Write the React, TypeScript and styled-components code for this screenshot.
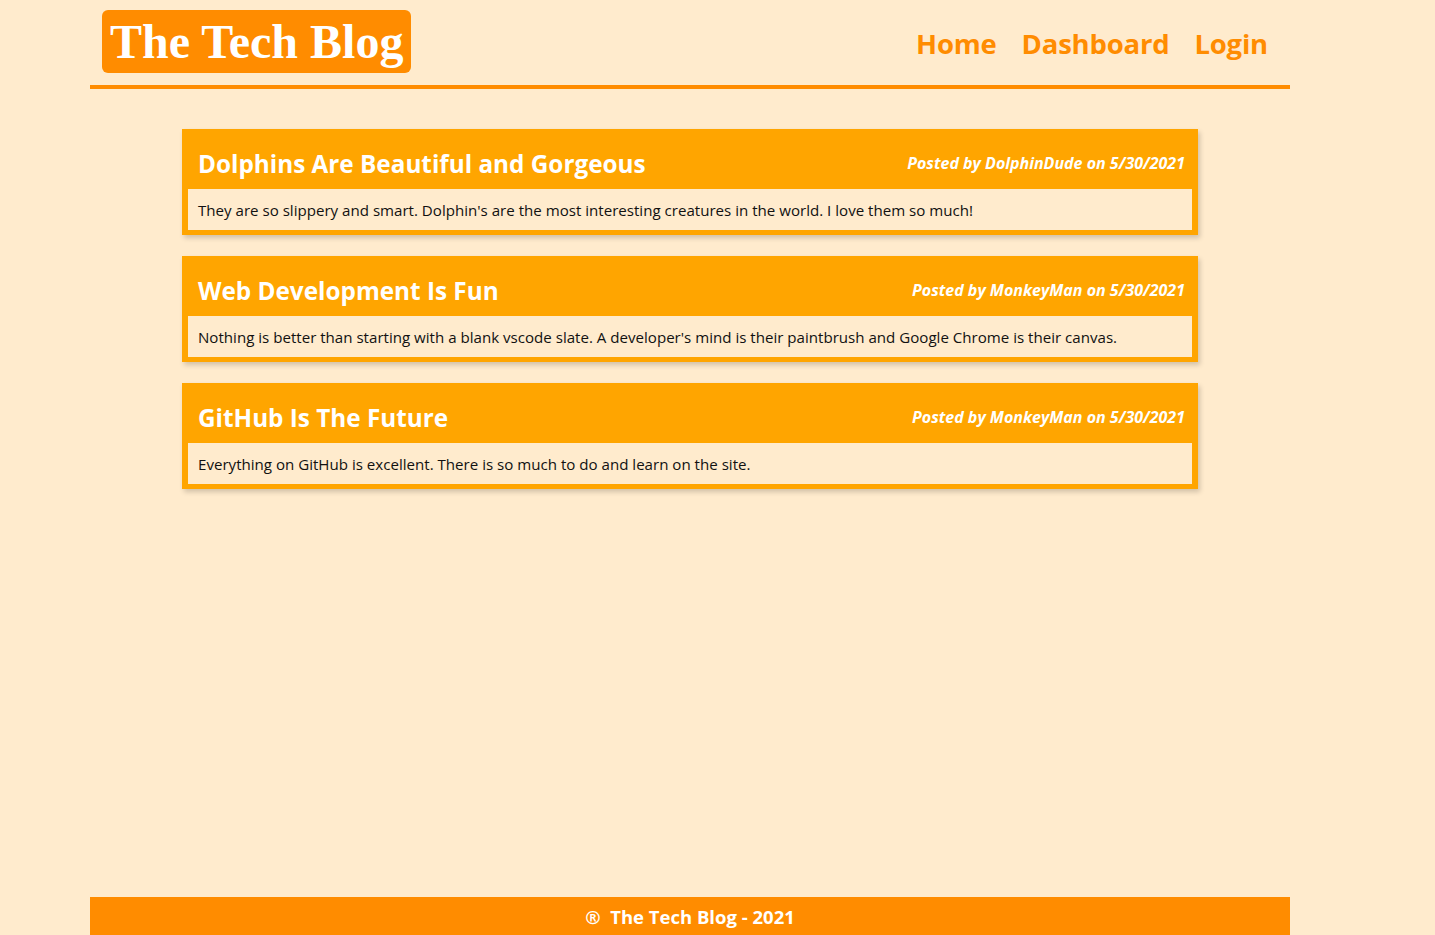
import React from "react";
import styled, { createGlobalStyle } from "styled-components";

const Global = createGlobalStyle`
  html, body { margin: 0; padding: 0; background: #ffebcd; }
  body { font-family: "Open Sans", "Noto Sans", sans-serif; }
  * { box-sizing: border-box; }
`;

const Page = styled.div`
  min-height: 100vh;
  margin: 0 145px 0 90px;
  display: flex;
  flex-direction: column;
`;

const Header = styled.header`
  display: flex;
  justify-content: space-between;
  align-items: flex-start;
  padding: 10px 22px 0 12px;
  height: 89px;
  border-bottom: 4px solid #ff8c00;
`;

const Logo = styled.h1`
  margin: 0;
  background: #ff8c00;
  color: #fff;
  border-radius: 6px;
  height: 63px;
  padding: 0 8px;
  font-family: "Liberation Serif", "Times New Roman", serif;
  font-weight: 700;
  font-size: 48px;
  line-height: 63px;
  white-space: nowrap;
`;

const Nav = styled.nav`
  display: flex;
  gap: 25px;
  margin-top: 12px;
`;

const NavLink = styled.a`
  color: #ff8c00;
  font-weight: 700;
  font-size: 27.5px;
  line-height: 44px;
  text-decoration: none;
  letter-spacing: -0.2px;
`;

const Main = styled.main`
  display: flex;
  flex-direction: column;
  gap: 21px;
  padding: 40px 92px 0;
`;

const Card = styled.article`
  background: #ffa500;
  padding: 0 6px 5px;
  box-shadow: 2px 3px 5px rgba(0, 0, 0, 0.18);
`;

const CardHead = styled.div`
  display: flex;
  justify-content: space-between;
  align-items: center;
  height: 60px;
  padding: 8px 7px 0 10px;
`;

const Title = styled.h2`
  margin: 0;
  color: #fff;
  font-size: 24.3px;
  font-weight: 700;
`;

const Meta = styled.span`
  color: #fff;
  font-size: 16px;
  font-style: italic;
  font-weight: 700;
`;

const Body = styled.p`
  margin: 0;
  background: #ffebcd;
  height: 41px;
  padding: 0 10px;
  display: flex;
  align-items: center;
  color: #111;
  font-size: 15.1px;
`;

const Footer = styled.footer`
  margin-top: auto;
  height: 38px;
  background: #ff8c00;
  color: #fff;
  font-weight: 700;
  font-size: 18.5px;
  display: flex;
  align-items: center;
  justify-content: center;
  white-space: pre;
`;

const posts = [
  {
    title: "Dolphins Are Beautiful and Gorgeous",
    author: "DolphinDude",
    body: "They are so slippery and smart. Dolphin's are the most interesting creatures in the world. I love them so much!",
  },
  {
    title: "Web Development Is Fun",
    author: "MonkeyMan",
    body: "Nothing is better than starting with a blank vscode slate. A developer's mind is their paintbrush and Google Chrome is their canvas.",
  },
  {
    title: "GitHub Is The Future",
    author: "MonkeyMan",
    body: "Everything on GitHub is excellent. There is so much to do and learn on the site.",
  },
];

export default function App() {
  return (
    <>
      <Global />
      <Page>
        <Header>
          <Logo>The Tech Blog</Logo>
          <Nav>
            <NavLink href="#">Home</NavLink>
            <NavLink href="#">Dashboard</NavLink>
            <NavLink href="#">Login</NavLink>
          </Nav>
        </Header>
        <Main>
          {posts.map((p) => (
            <Card key={p.title}>
              <CardHead>
                <Title>{p.title}</Title>
                <Meta>Posted by {p.author} on 5/30/2021</Meta>
              </CardHead>
              <Body>{p.body}</Body>
            </Card>
          ))}
        </Main>
        <Footer>{"®  The Tech Blog - 2021"}</Footer>
      </Page>
    </>
  );
}
